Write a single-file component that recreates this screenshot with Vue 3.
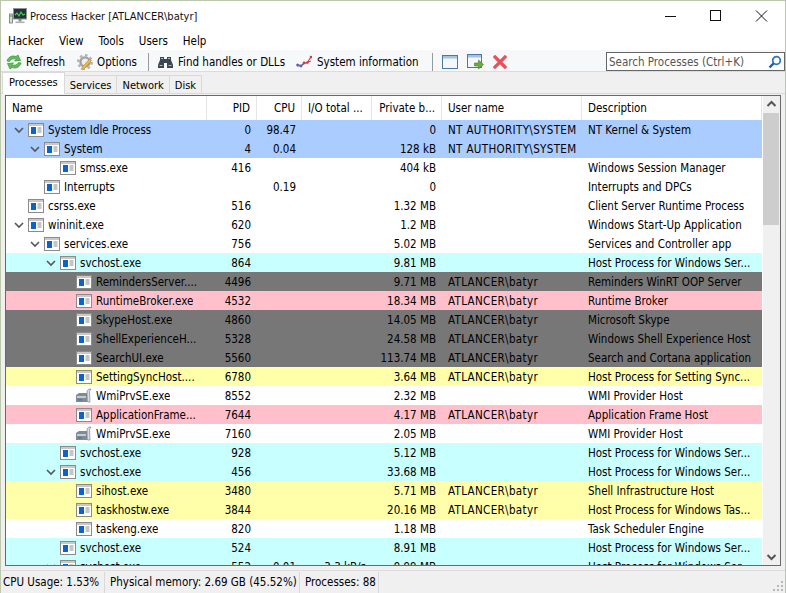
<script setup>
const columns = [
  { key: 'name', label: 'Name', cls: 'left' },
  { key: 'pid', label: 'PID', cls: 'right' },
  { key: 'cpu', label: 'CPU', cls: 'right' },
  { key: 'io', label: 'I/O total ...', cls: 'left' },
  { key: 'mem', label: 'Private b...', cls: 'right' },
  { key: 'user', label: 'User name', cls: 'left' },
  { key: 'desc', label: 'Description', cls: 'left' }
]
const U = 'ATLANCER\\batyr'
const rows = [
  { d: 0, o: 1, name: 'System Idle Process', pid: '0', cpu: '98.47', mem: '0', user: 'NT AUTHORITY\\SYSTEM', desc: 'NT Kernel & System', c: 'blue' },
  { d: 1, o: 1, name: 'System', pid: '4', cpu: '0.04', mem: '128 kB', user: 'NT AUTHORITY\\SYSTEM', desc: '', c: 'blue' },
  { d: 2, name: 'smss.exe', pid: '416', mem: '404 kB', desc: 'Windows Session Manager' },
  { d: 1, name: 'Interrupts', cpu: '0.19', mem: '0', desc: 'Interrupts and DPCs' },
  { d: 0, name: 'csrss.exe', pid: '516', mem: '1.32 MB', desc: 'Client Server Runtime Process' },
  { d: 0, o: 1, name: 'wininit.exe', pid: '620', mem: '1.2 MB', desc: 'Windows Start-Up Application' },
  { d: 1, o: 1, name: 'services.exe', pid: '756', mem: '5.02 MB', desc: 'Services and Controller app' },
  { d: 2, o: 1, name: 'svchost.exe', pid: '864', mem: '9.81 MB', desc: 'Host Process for Windows Ser...', c: 'cyan' },
  { d: 3, name: 'RemindersServer....', pid: '4496', mem: '9.71 MB', user: U, desc: 'Reminders WinRT OOP Server', c: 'gray' },
  { d: 3, name: 'RuntimeBroker.exe', pid: '4532', mem: '18.34 MB', user: U, desc: 'Runtime Broker', c: 'pink' },
  { d: 3, name: 'SkypeHost.exe', pid: '4860', mem: '14.05 MB', user: U, desc: 'Microsoft Skype', c: 'gray' },
  { d: 3, name: 'ShellExperienceH...', pid: '5328', mem: '24.58 MB', user: U, desc: 'Windows Shell Experience Host', c: 'gray' },
  { d: 3, name: 'SearchUI.exe', pid: '5560', mem: '113.74 MB', user: U, desc: 'Search and Cortana application', c: 'gray' },
  { d: 3, name: 'SettingSyncHost....', pid: '6780', mem: '3.64 MB', user: U, desc: 'Host Process for Setting Sync...', c: 'yellow' },
  { d: 3, i: 'w', name: 'WmiPrvSE.exe', pid: '8552', mem: '2.32 MB', desc: 'WMI Provider Host' },
  { d: 3, name: 'ApplicationFrame...', pid: '7644', mem: '4.17 MB', user: U, desc: 'Application Frame Host', c: 'pink' },
  { d: 3, i: 'w', name: 'WmiPrvSE.exe', pid: '7160', mem: '2.05 MB', desc: 'WMI Provider Host' },
  { d: 2, name: 'svchost.exe', pid: '928', mem: '5.12 MB', desc: 'Host Process for Windows Ser...', c: 'cyan' },
  { d: 2, o: 1, name: 'svchost.exe', pid: '456', mem: '33.68 MB', desc: 'Host Process for Windows Ser...', c: 'cyan' },
  { d: 3, name: 'sihost.exe', pid: '3480', mem: '5.71 MB', user: U, desc: 'Shell Infrastructure Host', c: 'yellow' },
  { d: 3, name: 'taskhostw.exe', pid: '3844', mem: '20.16 MB', user: U, desc: 'Host Process for Windows Tas...', c: 'yellow' },
  { d: 3, name: 'taskeng.exe', pid: '820', mem: '1.18 MB', desc: 'Task Scheduler Engine' },
  { d: 2, name: 'svchost.exe', pid: '524', mem: '8.91 MB', desc: 'Host Process for Windows Ser...', c: 'cyan' },
  { d: 2, o: 1, name: 'svchost.exe', pid: '552', cpu: '0.01', io: '3.3 kB/s', mem: '9.99 MB', desc: 'Host Process for Windows Ser...', c: 'cyan' }
]
</script>

<template>
  <div class="window">
    <div class="titlebar">
      <svg class="appicon" width="18" height="17" viewBox="0 0 18 17">
        <rect x="0.5" y="6" width="3" height="9" fill="#d8dcd8" stroke="#777" stroke-width=".8"/>
        <rect x="1.2" y="7" width="1.6" height="2" fill="#3fd03f"/>
        <rect x="4.5" y="0.5" width="13" height="10.5" fill="#26323a" stroke="#8c9599"/>
        <path d="M6 7l2-2 2 3 2-4 2 3 2-1" fill="none" stroke="#46d846" stroke-width="1.1"/>
        <rect x="9.5" y="11" width="3" height="2.5" fill="#8a8a8a"/>
        <rect x="6.5" y="13.5" width="9" height="1.6" fill="#b0b0b0"/>
      </svg>
      <span class="title">Process Hacker [ATLANCER\batyr]</span>
      <div class="caption">
        <svg width="46" height="30" viewBox="0 0 46 30"><path d="M18 15.5h11" stroke="#111"/></svg>
        <svg width="46" height="30" viewBox="0 0 46 30"><rect x="17.5" y="9.5" width="10" height="10" fill="none" stroke="#111"/></svg>
        <svg width="46" height="30" viewBox="0 0 46 30"><path d="M17 9.5l11 11M28 9.5l-11 11" stroke="#111" fill="none"/></svg>
      </div>
    </div>

    <div class="menu">
      <span>Hacker</span><span>View</span><span>Tools</span><span>Users</span><span>Help</span>
    </div>

    <div class="toolbar">
      <div class="tool">
        <svg width="16" height="16" viewBox="0 0 16 16">
          <path d="M1 7C2 3 6 1 10 2.500L12 1l2.500 5.500L8.500 7l1.800-1.800C7.500 4.200 4.500 5 3.500 7.500z" fill="#5fbf55" stroke="#3a8f3a" stroke-width=".7"/>
          <path d="M15 9c-1 4-5 6-9 4.500L4 15l-2.500-5.500L7.500 9 5.700 10.800c2.800 1 5.800.2 6.800-2.300z" fill="#5fbf55" stroke="#3a8f3a" stroke-width=".7"/>
        </svg>
        <span>Refresh</span>
      </div>
      <div class="tool">
        <svg width="16" height="16" viewBox="0 0 16 16">
          <circle cx="8" cy="8" r="4.600" fill="#eee" stroke="#a0a0a0" stroke-width="2.400"/>
          <circle cx="8" cy="8" r="6.800" fill="none" stroke="#b0b0b0" stroke-width="2.200" stroke-dasharray="2.600 2.700"/>
          <path d="M5 13.500l7.500-8.500 2 1.500-7.500 8.500-2.800.8z" fill="#edbb45" stroke="#b5872a" stroke-width=".6"/>
        </svg>
        <span>Options</span>
      </div>
      <i class="sep"></i>
      <div class="tool find">
        <svg width="15" height="16" viewBox="0 0 15 16">
          <path d="M2 3h4v2h3V3h4v3l2 5v3H9V9H6v5H0v-3l2-5z" fill="#3d4550"/>
          <path d="M1.500 11.500h3M10.500 11.500h3M3 4.500h2M10 4.500h2" stroke="#aebccb"/>
        </svg>
        <span>Find handles or DLLs</span>
      </div>
      <div class="tool sys">
        <svg width="16" height="16" viewBox="0 0 16 16">
          <path d="M1 10l4 2 3-3 3 0 4-6" fill="none" stroke="#d43c3c" stroke-width="1.200"/>
          <path d="M1 12l4 0 4-3 6-2" fill="none" stroke="#5070b8" stroke-width="1"/>
          <circle cx="5" cy="12" r="1.400" fill="#4a6ab5"/><circle cx="1.500" cy="11" r="1.300" fill="#4a6ab5"/><circle cx="8" cy="9" r="1.400" fill="#d43c3c"/><circle cx="11.500" cy="8.500" r="1.300" fill="#d43c3c"/><circle cx="15" cy="3" r="1.300" fill="#d43c3c"/>
        </svg>
        <span>System information</span>
      </div>
      <i class="sep"></i>
      <div class="tool plain">
        <svg width="16" height="14" viewBox="0 0 16 14">
          <rect x=".5" y=".5" width="15" height="13" fill="#f4f8fc" stroke="#4d77a8"/>
          <rect x="1" y="1" width="14" height="2.500" fill="#a6c2e0"/>
        </svg>
      </div>
      <div class="tool plain">
        <svg width="17" height="16" viewBox="0 0 17 16">
          <rect x=".5" y=".5" width="14" height="13" fill="#f4f8fc" stroke="#4d77a8"/>
          <rect x="1" y="1" width="13" height="2.500" fill="#a6c2e0"/>
          <path d="M7.500 9h4V6l5 4.500-5 4.500v-3h-4z" fill="#6cab3c" stroke="#44802a" stroke-width=".6"/>
        </svg>
      </div>
      <div class="tool plain">
        <svg width="14" height="14" viewBox="0 0 14 14">
          <path d="M2 2l10 10M12 2L2 12" stroke="#e8505a" stroke-width="3.200" stroke-linecap="square"/>
        </svg>
      </div>
      <div class="search">
        <span>Search Processes (Ctrl+K)</span>
        <svg width="14" height="14" viewBox="0 0 14 14">
          <circle cx="8.500" cy="5.500" r="3.800" fill="none" stroke="#2f74c0" stroke-width="1.800"/>
          <path d="M5.600 8.400L1.500 12.500" stroke="#1f5da8" stroke-width="2.400"/>
        </svg>
      </div>
    </div>

    <div class="tabs">
      <span class="tab active">Processes</span>
      <span class="tab">Services</span>
      <span class="tab">Network</span>
      <span class="tab">Disk</span>
    </div>

    <div class="panel">
      <div class="content">
        <div class="list">
          <div class="grid head">
            <div v-for="col in columns" :key="col.key" class="hcell" :class="col.cls">{{ col.label }}</div>
          </div>
          <div class="body">
            <div v-for="(r, idx) in rows" :key="idx" class="grid row" :class="r.c">
              <div class="cell namecell">
                <span class="indent" :class="'d' + r.d"></span>
                <svg class="chev" width="10" height="10" viewBox="0 0 10 10">
                  <path v-if="r.o" d="M1 3l4 4 4-4" fill="none" stroke="#555" stroke-width="1.600"/>
                </svg>
                <svg v-if="r.i === 'w'" class="picon" width="16" height="16" viewBox="0 0 16 16">
                  <path d="M0 7l3-2h8v9H0z" fill="#7f8b97"/>
                  <path d="M1 8h9v2H1z" fill="#c3ccd4"/>
                  <rect x="2" y="11" width="4" height="1.500" fill="#3b82c4"/>
                  <path d="M11 3l2-2h2l-1.500 2.500L14 14h-2.500z" fill="#d8dee3" stroke="#6b7580" stroke-width=".6"/>
                </svg>
                <svg v-else class="picon" width="16" height="14" viewBox="0 0 16 14">
                  <rect x=".5" y=".5" width="15" height="13" fill="#fff" stroke="#8b8b8b"/>
                  <rect x="1" y="1" width="14" height="2" fill="#c9c9c9"/>
                  <rect x="3" y="4" width="5" height="7" fill="#0a64cc"/>
                  <path d="M9.500 5h4M9.500 7h4M9.500 9h4" stroke="#8b8b8b"/>
                </svg>
                <span class="label">{{ r.name }}</span>
              </div>
              <div class="cell right">{{ r.pid }}</div>
              <div class="cell right">{{ r.cpu }}</div>
              <div class="cell right">{{ r.io }}</div>
              <div class="cell right">{{ r.mem }}</div>
              <div class="cell left user">{{ r.user }}</div>
              <div class="cell left">{{ r.desc }}</div>
            </div>
          </div>
        </div>
        <div class="scroll">
          <svg class="arrow" width="17" height="17" viewBox="0 0 17 17"><path d="M4.500 10l4-4 4 4" fill="none" stroke="#555" stroke-width="2"/></svg>
          <div class="track"><div class="thumb"></div></div>
          <svg class="arrow" width="17" height="17" viewBox="0 0 17 17"><path d="M4.500 7l4 4 4-4" fill="none" stroke="#555" stroke-width="2"/></svg>
        </div>
      </div>
    </div>

    <div class="status">
      <span class="st s1">CPU Usage: 1.53%</span>
      <span class="st s2">Physical memory: 2.69 GB (45.52%)</span>
      <span class="st s3">Processes: 88</span>
      <svg class="grip" width="12" height="12" viewBox="0 0 12 12">
        <path d="M9 1h2v2H9zM5 5h2v2H5zM9 5h2v2H9zM1 9h2v2H1zM5 9h2v2H5zM9 9h2v2H9z" fill="#b8b8b8"/>
      </svg>
    </div>
  </div>
</template>

<style>
html, body { margin: 0; padding: 0; background: #fff; overflow: hidden; }
</style>

<style scoped>
.window {
  width: 786px;
  height: 593px;
  box-sizing: border-box;
  border: 1px solid #bcc8ae;
  border-bottom: 0;
  font: 11.5px "DejaVu Sans Condensed", "DejaVu Sans", sans-serif;
  font-stretch: condensed;
  color: #000;
  background: #f0f0f0;
  display: flex;
  flex-direction: column;
  overflow: hidden;
}
.titlebar {
  height: 30px;
  background: #fff;
  display: flex;
  align-items: center;
  padding-left: 8px;
  flex: none;
}
.appicon { margin-right: 3px; }
.title { flex: 1; color: #111; font-size: 11px; }
.caption { display: flex; }
.menu {
  height: 19px;
  padding-top: 1px;
  box-sizing: border-box;
  background: #fff;
  display: flex;
  align-items: center;
  gap: 15px;
  padding-left: 7px;
  flex: none;
}
.toolbar {
  height: 22px;
  padding-top: 2px;
  background: #f7f8f9;
  border-bottom: 1px solid #dcdcdc;
  box-sizing: border-box;
  display: flex;
  align-items: center;
  padding-left: 5px;
  flex: none;
}
.tool { display: flex; align-items: center; gap: 4px; margin-right: 12px; }
.tool.find { margin-right: 11px; gap: 5px; }
.tool.sys { margin-right: 14px; gap: 5px; }
.tool.plain { margin-right: 9px; }
.sep { width: 1px; height: 18px; background: #999; margin: 0 9px 0 -1px; }
.search {
  margin-left: auto;
  width: 179px;
  height: 19px;
  box-sizing: border-box;
  border: 1px solid #666;
  background: #fff;
  display: flex;
  align-items: center;
  justify-content: space-between;
  padding: 0 2px;
  color: #555;
}
.tabs {
  height: 21px;
  display: flex;
  align-items: flex-end;
  padding-left: 1px;
  flex: none;
  font-size: 11px;
}
.tab {
  height: 18px;
  box-sizing: border-box;
  border: 1px solid #d9d9d9;
  border-bottom: 0;
  border-left-width: 0;
  padding: 0 5px;
  line-height: 19px;
  background: #f0f0f0;
}
.tab.active {
  height: 22px;
  background: #fff;
  border-width: 1px 1px 0 1px;
  padding: 0 6px;
  line-height: 19px;
  margin-bottom: -1px;
  position: relative;
  z-index: 1;
}
.panel {
  flex: none;
  height: 473px;
  box-sizing: border-box;
  padding: 1px 4px 0;
  border-top: 1px solid #d9d9d9;
  background: #f0f0f0;
}
.content {
  height: 471px;
  box-sizing: border-box;
  border: 1px solid #696969;
  display: flex;
  background: #fff;
}
.list { width: 756px; overflow: hidden; }
.grid {
  display: grid;
  grid-template-columns: 201px 50px 45px 70px 70px 140px 180px;
}
.head { height: 24px; }
.hcell {
  border-right: 1px solid #e5e5e5;
  padding: 0 6px;
  line-height: 25px;
  white-space: nowrap;
  overflow: hidden;
}
.body { height: 445px; overflow: hidden; }
.row { height: 19px; line-height: 20px; color: #000; white-space: nowrap; }
.cell { overflow: hidden; padding: 0 6px; }
.user { letter-spacing: .35px; }
.right { text-align: right; }
.left { text-align: left; }
.namecell {
  display: flex;
  align-items: center;
  padding: 0;
}
.indent { flex: none; display: block; }
.d0 { width: 8px; }
.d1 { width: 24px; }
.d2 { width: 40px; }
.d3 { width: 56px; }
.chev { flex: none; margin-right: 4px; }
.picon { flex: none; margin-right: 4px; }
.label { overflow: hidden; }
.blue { background: #aaccff; }
.cyan { background: #c8ffff; }
.pink { background: #ffc0cb; }
.yellow { background: #ffffaa; }
.gray { background: #777; }
.scroll {
  width: 17px;
  display: flex;
  flex-direction: column;
  background: #f0f0f0;
  margin-left: 1px;
}
.arrow { flex: none; }
.track { flex: 1; }
.thumb { height: 112px; width: 16px; background: #cdcdcd; }
.status {
  flex: 1;
  margin-top: 4px;
  display: flex;
  align-items: center;
  border-top: 1px solid #dcdcdc;
  position: relative;
}
.st {
  display: block;
  padding: 0 5px;
  border-right: 1px solid #d9d9d9;
  height: 21px;
  line-height: 21px;
  box-sizing: border-box;
  white-space: nowrap;
}
.s1 { width: 104px; padding-left: 2px; }
.s2 { width: 195px; }
.s3 { width: 79px; }
.grip { position: absolute; right: 1px; bottom: 1px; }
</style>
